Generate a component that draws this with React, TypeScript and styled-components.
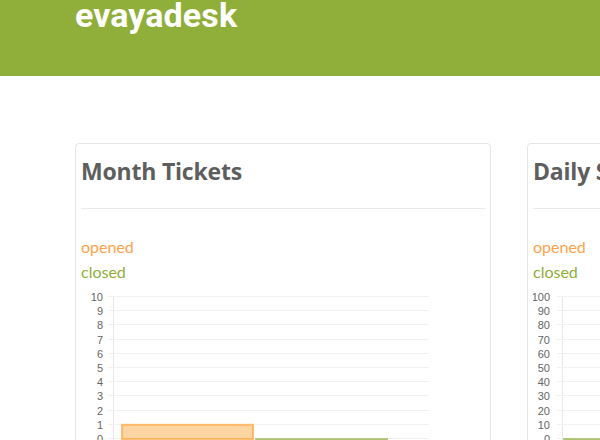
import React from "react"
import styled, { createGlobalStyle } from "styled-components"

const GREEN = "#8fae3a"
const ORANGE = "#ffa24a"

const GlobalStyle = createGlobalStyle`
  html, body {
    margin: 0;
    padding: 0;
    background: #fff;
    overflow: hidden;
  }
  body {
    font-family: "Lato", "Open Sans", sans-serif;
  }
`

const Header = styled.header`
  height: 76px;
  background: ${GREEN};
  padding: 0 75px;
  overflow: hidden;
`

const Brand = styled.h1`
  margin: -2px 0 0;
  font-family: "Roboto", "Liberation Sans", sans-serif;
  font-weight: 700;
  font-size: 34px;
  line-height: 34px;
  color: #fff;
  letter-spacing: 0.1px;
`

const Main = styled.main`
  padding: 67px 0 0 75px;
`

const CardRow = styled.div`
  display: flex;
  gap: 36px;
  width: 1000px;
`

const Card = styled.section`
  width: 416px;
  height: 400px;
  box-sizing: border-box;
  border: 1px solid #e6e6e6;
  border-radius: 4px;
  padding: 0 5px;
  flex-shrink: 0;
`

const CardTitle = styled.h2`
  margin: 15px 0 0;
  font-family: "Open Sans", "DejaVu Sans", sans-serif;
  font-weight: 700;
  font-size: 23px;
  line-height: 24px;
  letter-spacing: -0.2px;
  color: #5e5e5e;
`

const Divider = styled.hr`
  margin: 25px 0 25px;
  border: 0;
  border-top: 1px solid #ebebeb;
`

const Legend = styled.ul`
  list-style: none;
  margin: 0;
  padding: 0;
`

const LegendItem = styled.li<{ $color: string }>`
  font-size: 16px;
  line-height: 25px;
  color: ${(p) => p.$color};
`

const ChartSvg = styled.svg`
  display: block;
  margin-top: 1px;
  font-family: "Liberation Sans", Arial, sans-serif;
  font-size: 11px;
`

type Bar = { x: number; w: number; value: number; fill: string; stroke: string }

type ChartProps = {
  max: number
  labelX: number
  axisX: number
  bars: Bar[]
}

function BarChart({ max, labelX, axisX, bars }: ChartProps): JSX.Element {
  const top = 11
  const bottom = 153
  const steps = 10
  const step = (bottom - top) / steps
  const right = 348
  const ticks = Array.from({ length: steps + 1 }, (_, i) => i)
  return (
    <ChartSvg width="404" height="170">
      <line x1={axisX + 0.5} y1={top} x2={axisX + 0.5} y2={170} stroke="#e8e8e8" />
      {ticks.map((i) => {
        const y = Math.round(top + i * step) + 0.5
        const v = Math.round(max - (max / steps) * i)
        return (
          <g key={i}>
            <line x1={axisX - 5} y1={y} x2={right} y2={y} stroke="#f1f1f1" />
            <text x={labelX} y={y + 4} textAnchor="end" fill="#666">
              {v}
            </text>
          </g>
        )
      })}
      {bars.map((b, i) => {
        const h = (b.value / max) * (bottom - top)
        return (
          <rect
            key={i}
            x={b.x + 1}
            y={bottom - h + 1}
            width={b.w - 2}
            height={Math.max(h, 2)}
            fill={b.fill}
            stroke={b.stroke}
            strokeWidth="2"
          />
        )
      })}
    </ChartSvg>
  )
}

const openedFill = "rgba(255, 176, 88, 0.55)"
const openedStroke = "rgba(255, 170, 70, 0.75)"
const closedFill = "rgba(143, 174, 58, 0.35)"
const closedStroke = "rgba(143, 174, 58, 0.6)"

function TicketCard({ title, max, labelX, axisX, bars }: { title: string } & ChartProps) {
  return (
    <Card>
      <CardTitle>{title}</CardTitle>
      <Divider />
      <Legend>
        <LegendItem $color={ORANGE}>opened</LegendItem>
        <LegendItem $color={GREEN}>closed</LegendItem>
      </Legend>
      <BarChart max={max} labelX={labelX} axisX={axisX} bars={bars} />
    </Card>
  )
}

export default function App(): JSX.Element {
  return (
    <>
      <GlobalStyle />
      <Header>
        <Brand>evayadesk</Brand>
      </Header>
      <Main>
        <CardRow>
          <TicketCard
            title="Month Tickets"
            max={10}
            labelX={22}
            axisX={32}
            bars={[
              { x: 40, w: 133, value: 1, fill: openedFill, stroke: openedStroke },
              { x: 174, w: 133, value: 0, fill: closedFill, stroke: closedStroke },
            ]}
          />
          <TicketCard
            title="Daily Stats"
            max={100}
            labelX={17}
            axisX={29}
            bars={[
              { x: 30, w: 60, value: 0, fill: closedFill, stroke: closedStroke },
            ]}
          />
        </CardRow>
      </Main>
    </>
  )
}
